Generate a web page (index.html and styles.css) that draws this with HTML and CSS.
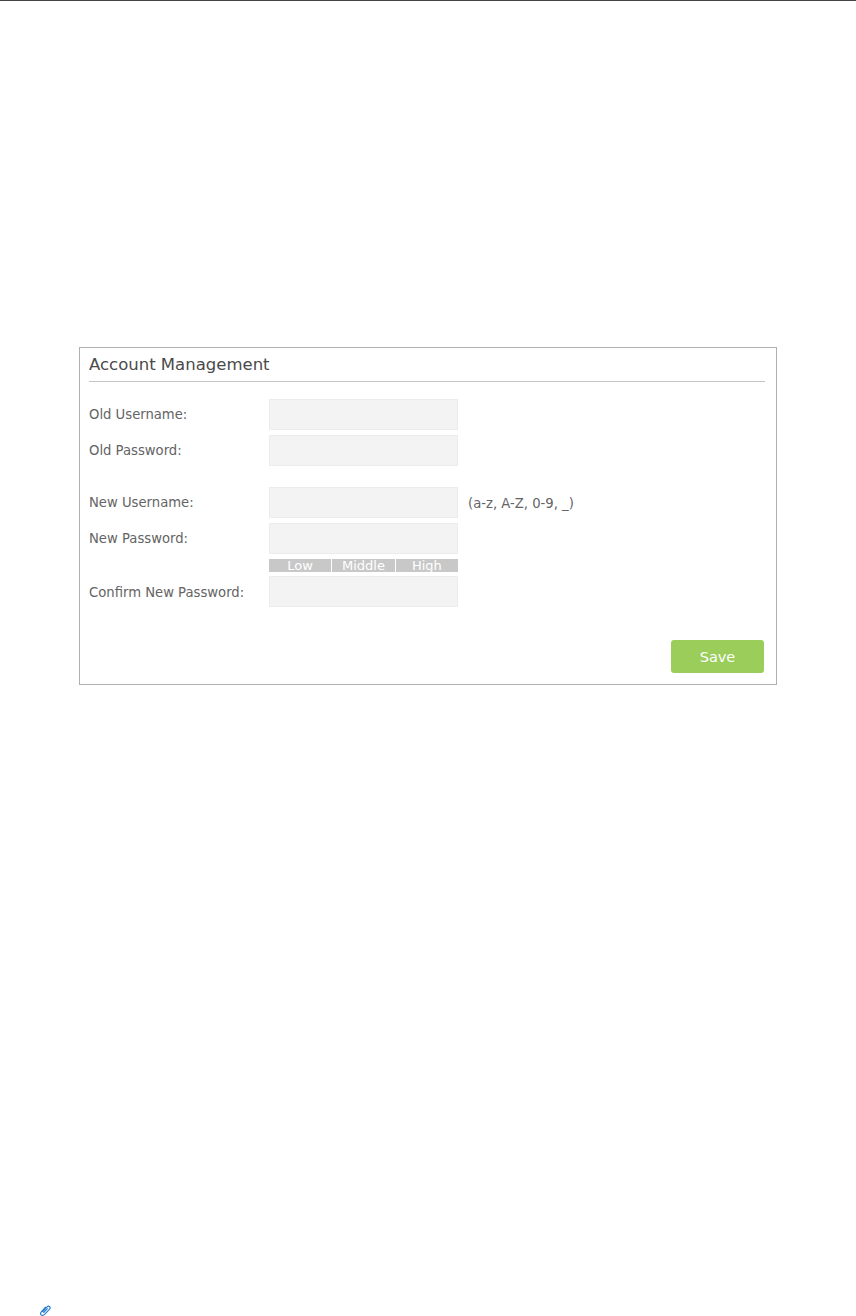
FILE: index.html
```html
<!DOCTYPE html>
<html lang="en">
<head>
  <meta charset="UTF-8">
  <title>Account Management</title>
  <link rel="stylesheet" href="styles.css">
</head>
<body>

  <div class="top-rule"></div>

  <div class="panel">
    <h3 class="panel-title">Account Management</h3>

    <div class="row first">
      <label>Old Username:</label>
      <input type="text">
    </div>
    <div class="row">
      <label>Old Password:</label>
      <input type="text">
    </div>

    <div class="row group">
      <label>New Username:</label>
      <input type="text">
      <span class="hint">(a-z, A-Z, 0-9, _)</span>
    </div>
    <div class="row">
      <label>New Password:</label>
      <input type="text">
    </div>
    <div class="strength">
      <span>Low</span>
      <span>Middle</span>
      <span>High</span>
    </div>
    <div class="row confirm">
      <label>Confirm New Password:</label>
      <input type="text">
    </div>

    <div class="actions">
      <button>Save</button>
    </div>
  </div>

  <div class="footer">
    <svg class="clip" width="12" height="11" viewBox="0 0 12 11">
      <path d="M3.4 7 7.6 2.4C8.6 1.3 10 1 10.7 1.6 11.4 2.3 11.1 3.6 10.1 4.7L5.6 9.3C4.5 10.4 3 10.6 2.1 9.9 1.3 9.1 1.5 7.7 2.5 6.6L6.8 2" fill="none" stroke="#2a7fd0" stroke-width="1.2"/>
      <path d="M4.4 7.9 8.6 3.4" fill="none" stroke="#2a7fd0" stroke-width="1.1"/>
    </svg>
  </div>

</body>
</html>
```

FILE: styles.css
```css
html, body {
  margin: 0;
  height: 1316px;
  overflow: hidden;
}
body {
  position: relative;
  font-family: "DejaVu Sans", Verdana, sans-serif;
  background-color: #fff;
  color: #646464;
}
.top-rule {
  height: 1px;
  background-color: #444;
}
.panel {
  box-sizing: border-box;
  width: 698px;
  height: 338px;
  margin: 346px 0 0 79px;
  padding: 0 11px 0 9px;
  border: 1px solid #b0b0b0;
}
.panel-title {
  margin: 0;
  height: 33px;
  line-height: 33px;
  font-size: 16.5px;
  font-weight: normal;
  color: #4a4a4a;
  border-bottom: 1px solid #c4c4c4;
}
.row {
  display: flex;
  align-items: center;
  height: 31px;
  margin-top: 5px;
  font-size: 13.2px;
}
.row.first {
  margin-top: 17px;
}
.row.group {
  margin-top: 21px;
}
.row.confirm {
  margin-top: 4px;
}
.row label {
  width: 180px;
  flex-shrink: 0;
}
.row.confirm label,
.hint {
  padding-top: 1px;
}
.row input {
  box-sizing: border-box;
  width: 189px;
  height: 31px;
  padding: 0;
  border: 1px solid #ececec;
  background-color: #f3f3f3;
}
.hint {
  margin-left: 10px;
}
.strength {
  display: flex;
  gap: 1px;
  width: 189px;
  height: 13px;
  margin: 5px 0 0 180px;
}
.strength span {
  flex: 1;
  height: 13px;
  background-color: #c8c8c8;
  color: #fff;
  font-size: 13px;
  line-height: 13px;
  text-align: center;
}
.actions {
  display: flex;
  justify-content: flex-end;
  margin-top: 33px;
  padding-right: 1px;
}
button {
  width: 93px;
  height: 33px;
  padding: 0;
  border: 0;
  border-radius: 3px;
  background-color: #9acd5a;
  color: #fff;
  font-family: inherit;
  font-size: 14.5px;
}
.footer {
  position: absolute;
  left: 39px;
  top: 1305px;
  height: 11px;
}
.clip {
  display: block;
}
```
